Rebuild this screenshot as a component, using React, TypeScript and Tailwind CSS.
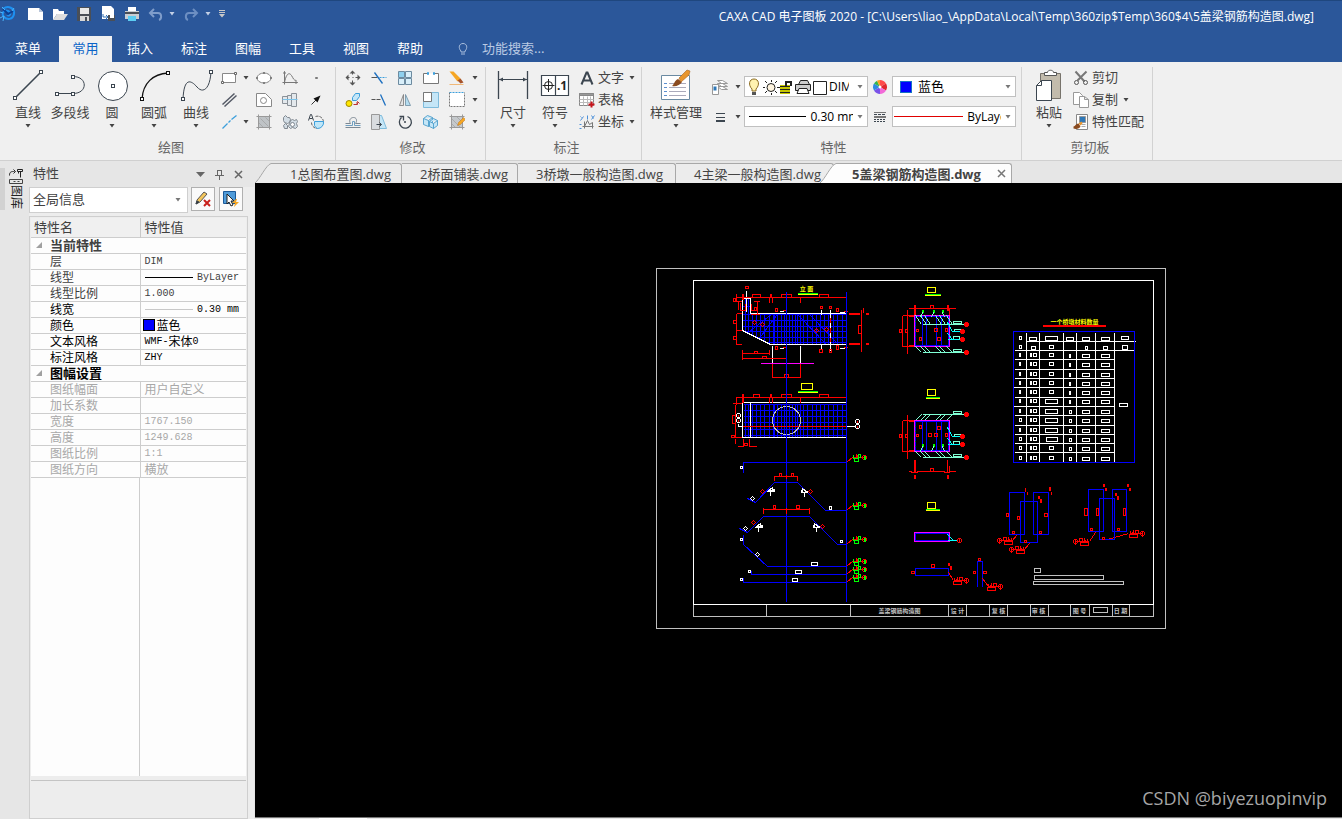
import React from "react";

const DARK = "#3c4650";
const BLUE = "#3b9fdc";
const PALE = "#c5e6f7";

type IconProps = { size?: number; crisp?: boolean; children: React.ReactNode };

// crisp shifts the view by half a unit, so whole coordinates give sharp 1px strokes
const Icon = ({ size = 16, crisp, children }: IconProps) => (
  <svg
    width={size}
    height={size}
    viewBox={crisp ? `-0.5 -0.5 ${size} ${size}` : `0 0 ${size} ${size}`}
    fill="none"
    stroke={DARK}
    className="shrink-0"
    aria-hidden="true"
  >
    {children}
  </svg>
);

const Caret = ({ color = "#444" }: { color?: string }) => (
  <svg width="6" height="4" viewBox="0 0 6 4" className="shrink-0" aria-hidden="true">
    <path d="M.5 0h5L3 3.5z" fill={color} />
  </svg>
);

/* ---------- quick access icons ---------- */

const quickIcons = [
  {
    label: "新建",
    art: (
      <g stroke="none">
        <path d="M0 2h11l4 4v8H0z" fill="#fff" />
        <path d="M11 2v4h4z" fill="#b9c6da" />
      </g>
    ),
  },
  {
    label: "打开",
    art: (
      <g stroke="none">
        <path d="M1 3h5l1 2h5v3H5l-4 6z" fill="#fff" />
        <path d="M5 8h11l-4 6H1z" fill="#dedede" />
      </g>
    ),
  },
  {
    label: "保存",
    art: (
      <g stroke="none">
        <path d="M1 1h14v14H1z" fill="#4a4f57" />
        <path d="M4 2h9v6H4z" fill="#e9e9e9" />
        <path d="M4 10h9v5H4z" fill="#d9d9d9" />
        <path d="M9 11h2v4H9z" fill="#4a4f57" />
      </g>
    ),
  },
  {
    label: "另存为",
    art: (
      <g stroke="none">
        <path d="M2 0h9l3 3v10H2z" fill="#fff" />
        <path d="M3 8v3h5M6 9l2 2-2 2" stroke="#2f6fb5" />
        <path d="M8 9h7v6H8z" fill="#4a4f57" />
        <path d="M10 9h4v3h-4z" fill="#fff" />
      </g>
    ),
  },
  {
    label: "打印",
    art: (
      <g stroke="none">
        <path d="M4 1h8v5H4z" fill="#fff" />
        <path d="M1 5h14v8H1z" fill="#c9cdd2" />
        <path d="M1 6h14v2H1z" fill="#4a4f57" />
        <path d="M4 10h8v5H4z" fill="#5ccdf2" />
      </g>
    ),
  },
];

/* ---------- ribbon icons ---------- */

const knob = (x: number, y: number) => (
  <rect x={x - 1.5} y={y - 1.5} width="3" height="3" fill="#fff" />
);

const drawTools = [
  {
    label: "直线",
    caret: true,
    art: (
      <>
        <path d="M4 30 30 4" strokeWidth="1.6" />
        {knob(4, 30)}
        {knob(30, 4)}
      </>
    ),
  },
  {
    label: "多段线",
    caret: false,
    art: (
      <>
        <path d="M3 25.500h17c15 0 15-17 0-17" />
        {knob(4, 26)}
        {knob(20, 26)}
        {knob(20, 9)}
      </>
    ),
  },
  {
    label: "圆",
    caret: true,
    art: (
      <>
        <circle cx="18" cy="18" r="14.5" fill="#fff" />
        {knob(18, 18)}
      </>
    ),
  },
  {
    label: "圆弧",
    caret: true,
    art: (
      <>
        <path d="M5 31C6 15 16 6 31 5" strokeWidth="1.3" stroke="#111" />
        <g stroke="#111">
          {knob(5, 31)}
          {knob(31, 5)}
        </g>
      </>
    ),
  },
  {
    label: "曲线",
    caret: true,
    art: (
      <>
        <path d="M4 31C5 9 12 12 18 19S31 21 32 4" />
        {knob(4, 31)}
        {knob(32, 4)}
      </>
    ),
  },
];

const drawGrid = [
  {
    label: "矩形",
    caret: true,
    art: (
      <g stroke="#888">
        <path d="M1 3h13v9H1z" fill="#fff" />
        <path d="M0 11h2v2H0zM13 2h2v2h-2z" fill="#fff" stroke="#666" />
      </g>
    ),
  },
  {
    label: "椭圆",
    art: (
      <g stroke="#888">
        <ellipse cx="7.500" cy="7.500" rx="7" ry="5" fill="#fff" />
        <path d="M0 7h1v1H0zM14 7h1v1h-1zM7 2h1v1H7zM7 12h1v1H7z" fill="#fff" stroke="#666" />
      </g>
    ),
  },
  {
    label: "公式曲线",
    art: (
      <g stroke="#777">
        <path d="M2 1v13M0 12h15M1 3l1-2 1 2M13 11l2 1-2 1" />
        <path d="M2 12C4 2 7 2 9 5s2 5 5 5" />
      </g>
    ),
  },
  { label: "点", art: <path d="M7 7h2v1H7z" strokeWidth="0.500" stroke="#555" fill="#555" /> },
  {
    label: "平行线",
    art: <path d="M1 12 13 1M3 14 15 3" strokeWidth="1.500" stroke="#555a66" />,
  },
  {
    label: "等距线",
    art: (
      <g stroke="#888">
        <path d="M0 1h9l6 6v7H0z" fill="#fff" />
        <circle cx="7" cy="8" r="3" />
      </g>
    ),
  },
  {
    label: "孔/轴",
    art: (
      <g stroke="#8a9198">
        <path d="M0 4h5v7H0zM5 3h4v10H5zM9 1h5v13H9z" fill="#e3e8ec" />
        <path d="M0 7h15" stroke="#7cc3ea" />
      </g>
    ),
  },
  {
    label: "箭头",
    art: (
      <>
        <path d="M3 12l6-6" stroke="#333" />
        <path d="M12 3 5 6l4 4z" fill="#111" stroke="none" />
      </>
    ),
  },
  {
    label: "中心线",
    caret: true,
    art: <path d="M1 14 6 9M7 8l2-2M10 5l5-4" stroke={BLUE} strokeWidth="1.300" />,
  },
  {
    label: "剖面线",
    art: (
      <g stroke="#999">
        <path d="M2 2h11v11H2z" fill="#bfc3c6" stroke="none" />
        <path d="M2 0v15M13 0v15M0 2h15M0 13h15" />
        <path d="M2 8l5 5M4 4l8 8M9 3l4 4" strokeWidth="0.600" />
      </g>
    ),
  },
  {
    label: "块",
    art: (
      <>
        <path
          d="M1 3l2-2 2 2h2l1 2-1 3-2 1-3-1-1-2z M8 6l2-1 2 1 2-1 1 2-1 2 1 3-2 2-3-1-2 1-2-2 1-3z M1 11l2-2 2 2v3H2z"
          fill="#d3dde5"
          stroke="#808890"
        />
        <circle cx="10" cy="10" r="2" fill="#fff" stroke="#808890" />
      </>
    ),
  },
  {
    label: "填充",
    art: (
      <>
        <path d="M7 2a6 6 0 0 1 8 6M3 8a6 6 0 0 0 6 6" stroke="#666" strokeDasharray="3 1" />
        <path d="M6 7h9a6 6 0 0 1-6 7 5 5 0 0 1-3-3z" fill="#bfe6f8" stroke={BLUE} />
        <path d="M0 6l2-6h1l2 6M1 4h3" />
      </>
    ),
  },
];

const modifyGrid = [
  {
    label: "移动",
    art: (
      <>
        <path d="M7 1v3M7 10v4M1 7h3M10 7h4M7 7h1" stroke="#555" />
        <path d="M7 0l3 3H4zM7 15l3-3H4zM0 7l3-3v6zM15 7l-3-3v6z" fill="#555" stroke="none" />
      </>
    ),
  },
  {
    label: "裁剪",
    art: (
      <>
        <path d="M0 7h6" stroke="#555" />
        <path d="M8 7h7" stroke={BLUE} strokeDasharray="2 1" />
        <path d="M3 2l8 11" stroke="#1c6fc0" strokeWidth="1.300" />
      </>
    ),
  },
  {
    label: "阵列",
    art: (
      <g stroke="#6d8ba0">
        <path d="M1 1h6v6H1z" fill="#8fd0ee" />
        <path d="M8 1h6v6H8zM1 8h6v6H1zM8 8h6v6H8z" fill="#d9effa" />
      </g>
    ),
  },
  {
    label: "打断",
    art: (
      <>
        <path d="M4 3H0v10h15V3h-4" fill="#fff" stroke="#777" />
        <path d="M4 2h1v2H4zM10 2h1v2h-1z" stroke={BLUE} fill="#fff" />
      </>
    ),
  },
  {
    label: "删除",
    caret: true,
    art: (
      <>
        <path d="M0 1h4l7 7-3 3z" fill="#f5a623" stroke="none" />
        <path d="M8 10l3-2 3 4-3 1z" fill="#a5522a" stroke="none" />
        <path d="M0 14h14" stroke="#f0b878" />
      </>
    ),
  },
  {
    label: "平移复制",
    art: (
      <>
        <circle cx="3.500" cy="11" r="3" fill="#ffe600" stroke="#a08a00" />
        <path d="M7 5l3-4h4v3l-3 4H7z" fill={PALE} stroke={BLUE} />
        <path d="M8 12h4v-2M11 11l1-2 2 2" stroke="#b33" />
      </>
    ),
  },
  {
    label: "延伸",
    art: (
      <>
        <path d="M0 7h10" stroke="#555" strokeDasharray="4 1" />
        <path d="M9 2l5 11" stroke="#1c6fc0" strokeWidth="1.300" />
      </>
    ),
  },
  {
    label: "镜像",
    art: (
      <g strokeWidth="0.800">
        <path d="M6 2v11H2z" fill="#e4e4e4" stroke="#777" />
        <path d="M8 2v11h5z" fill="#b5ddf0" stroke="#6d8ba0" />
      </g>
    ),
  },
  {
    label: "缩放",
    art: (
      <>
        <path d="M0 0h15v15H0z" fill={PALE} stroke="#7fbbdb" />
        <path d="M0 0h8v9H0z" fill="#fff" stroke="#777" />
      </>
    ),
  },
  {
    label: "拉伸",
    caret: true,
    art: (
      <>
        <path d="M0 0v14h15V0" fill="#fff" stroke="#777" strokeDasharray="2 1" />
        <path d="M0 0h15" stroke={BLUE} strokeDasharray="2 1" />
      </>
    ),
  },
  {
    label: "等距",
    art: (
      <g stroke="#7c8893">
        <path d="M0 9h5c-2-3 0-6 3-6s4 3 2 6h5M0 13h15" />
        <path d="M0 11h7V7h2v4h6" stroke="#6f9fc0" />
      </g>
    ),
  },
  {
    label: "倾斜",
    art: (
      <>
        <path d="M8 1h2l5 13H8z" fill={PALE} stroke="#7fbbdb" />
        <path d="M0 0h8v15H0z" fill="#d9dcdf" stroke="#999" />
        <path d="M5 10h5M8 8l2 2-2 2" />
      </>
    ),
  },
  {
    label: "旋转",
    art: (
      <>
        <path d="M10 2a6 6 0 1 1-6 1" strokeWidth="1.300" />
        <path d="M2 2h4v4" strokeWidth="1.300" />
        <path d="M7 7h1v1H7z" />
      </>
    ),
  },
  {
    label: "立体",
    art: (
      <g stroke="#4c9dcb" strokeWidth="0.900">
        <path d="M0 4l4-3 5 2v6l-4 3-5-2zM0 4l5 2 4-3M5 6v6" fill={PALE} />
        <path d="M6 7l4-3 4 2v5l-4 3-4-2zM6 7l4 2 4-3M10 9v5" fill={PALE} />
      </g>
    ),
  },
  {
    label: "编辑填充",
    caret: true,
    art: (
      <>
        <path d="M2 2h11v11H2z" fill="#c5c9cc" stroke="none" />
        <path d="M2 0v15M13 0v15M0 2h15M0 13h15" stroke="#999" />
        <path d="M2 9l4 4M2 4l9 9M7 2l6 6" stroke="#999" strokeWidth="0.600" />
        <path d="M8 11l1-3 5-5 2 2-5 5z" fill="#f5a623" stroke="#a86520" strokeWidth="0.400" />
      </>
    ),
  },
];

const DimensionIcon = () => (
  <Icon size={34}>
    <path d="M2.500 3v28M31.500 3v28" strokeWidth="1.300" />
    <path d="M3 11.500h28" />
    <path d="M3 11.500l4-2v4zM31 11.500l-4-2v4z" fill={DARK} stroke="none" />
  </Icon>
);

const SymbolIcon = () => (
  <Icon size={34}>
    <path d="M3.500 7.500h27v20h-27zM17.500 7.500v20" fill="#fff" strokeWidth="1.200" />
    <circle cx="10.500" cy="17.500" r="4" stroke="#222" />
    <path d="M4.500 17.500h12M10.500 11v13" stroke="#222" />
    <text x="19" y="22" fontSize="12" fontWeight="700" fill="#222" stroke="none">
      .1
    </text>
  </Icon>
);

const StyleIcon = () => (
  <Icon size={34}>
    <path d="M2.500 7.500h28v24h-28z" fill="#fff" stroke="#6a8aa2" />
    <path d="M5 15.500h3M5 19.500h3M5 23.500h3M5 27.500h3" stroke="#5b8fd0" />
    <path d="M10 15.500h17M10 19.500h17M10 23.500h17M10 27.500h17" stroke="#aab" />
    <path d="M13 18c2-1 2-5 6-7l4 3c-2 3-6 5-10 4z" fill="#8a4b20" stroke="none" />
    <path d="M20 10 28 2l3 1-1 4-8 7z" fill="#e8962e" stroke="#a86520" strokeWidth="0.600" />
  </Icon>
);

const PasteIcon = () => (
  <Icon size={34}>
    <path d="M8.500 5.500h20v25h-20z" fill="#c2bbac" stroke="#77736b" />
    <path d="M12.500 7.500v-3h3c0-3 6-3 6 0h3v3z" fill="#fff" stroke="#555" />
    <path d="M4.500 17.500l5-5h10v20h-15z" fill="#fff" />
    <path d="M4.500 17.500h5v-5" />
  </Icon>
);

const BigButton = ({
  label,
  caret,
  wide,
  children,
}: {
  label: string;
  caret: boolean;
  wide?: boolean;
  children: React.ReactNode;
}) => (
  <button
    type="button"
    className={`flex flex-col items-center whitespace-nowrap ${wide ? "w-[60px]" : "w-[42px]"}`}
  >
    <span className="h-9 flex items-center">{children}</span>
    <span className="leading-[18px]">{label}</span>
    <span className="h-[10px] flex items-center">{caret && <Caret />}</span>
  </button>
);

const IconButton = ({ label, children }: { label: string; children: React.ReactNode }) => (
  <button type="button" aria-label={label} className="h-[22px] flex items-center justify-center">
    <Icon crisp>{children}</Icon>
  </button>
);

const Group = ({
  title,
  className,
  children,
}: {
  title: string;
  className: string;
  children: React.ReactNode;
}) => (
  <section className={`flex flex-col shrink-0 border-r border-[#d2d2d2] ${className}`}>
    <div className="flex h-[66px]">{children}</div>
    <h2 className="mt-1 text-center leading-5 text-[#666]">{title}</h2>
  </section>
);

const SmallButton = ({
  label,
  caret,
  children,
}: {
  label: string;
  caret?: boolean;
  children: React.ReactNode;
}) => (
  <button type="button" className="h-[22px] flex items-center gap-[3px] whitespace-nowrap">
    <Icon crisp>{children}</Icon>
    <span>{label}</span>
    {caret && (
      <span className="pl-[2px]">
        <Caret />
      </span>
    )}
  </button>
);

const Combo = ({
  label,
  value,
  className,
  children,
}: {
  label: string;
  value: string;
  className: string;
  children?: React.ReactNode;
}) => (
  <div className="w-[124px] h-[21px] flex items-center border border-[#c0c0c0] bg-white font-['Open_Sans','Noto_Sans_CJK_SC',sans-serif] text-xs text-black">
    {children}
    <select aria-label={label} className={`appearance-none bg-transparent ${className}`}>
      <option>{value}</option>
    </select>
    <span className="w-[14px] ml-auto flex justify-center">
      <Caret color="#777" />
    </span>
  </div>
);

const Ribbon = () => (
  <div className="flex h-[99px] pt-[5px] border-b border-[#d0d0d0] bg-[#f0f0f0] text-[13px] text-[#444] overflow-hidden">
    <Group title="绘图" className="w-[336px] pl-[7px]">
      {drawTools.map((tool) => (
        <BigButton key={tool.label} label={tool.label} caret={tool.caret}>
          <Icon size={34}>{tool.art}</Icon>
        </BigButton>
      ))}
      <div className="grid grid-cols-[24px_10px_26px_26px_26px]">
        {drawGrid.map((tool, i) => (
          <React.Fragment key={tool.label}>
            <IconButton label={tool.label}>{tool.art}</IconButton>
            {i % 4 === 0 && (
              <span className="flex items-center justify-center">{tool.caret && <Caret />}</span>
            )}
          </React.Fragment>
        ))}
      </div>
    </Group>

    <Group title="修改" className="w-[150px] pl-1">
      <div className="grid grid-cols-[26px_26px_26px_26px_26px_10px]">
        {modifyGrid.map((tool) => (
          <React.Fragment key={tool.label}>
            <IconButton label={tool.label}>{tool.art}</IconButton>
            {/* only the last icon of a row opens a menu */}
            {tool.caret && (
              <span className="flex items-center justify-center">
                <Caret />
              </span>
            )}
          </React.Fragment>
        ))}
      </div>
    </Group>

    <Group title="标注" className="w-[156px] pl-[6px]">
      <BigButton label="尺寸" caret>
        <DimensionIcon />
      </BigButton>
      <BigButton label="符号" caret>
        <SymbolIcon />
      </BigButton>
      <div className="ml-[3px]">
        <SmallButton label="文字" caret>
          <path d="M2 14 7 2h1l5 12M4 10h7" strokeWidth="2" />
        </SmallButton>
        <SmallButton label="表格">
          <path d="M0 1h14v12H0z" fill="#fff" stroke="#888" />
          <path d="M0 1h14v2H0z" fill="#999" stroke="#888" />
          <path d="M0 7h14M0 10h14M4 4v9M8 4v9M11 4v9" stroke="#bbb" />
          <path d="M12 9v6M9 12h6" stroke="#c8141c" strokeWidth="2" />
        </SmallButton>
        <SmallButton label="坐标" caret>
          <path d="M5 7v7M3 12h11M5 12l3-6 2 4 3-2v6" stroke="#777" />
          <path d="M1 2l1 1M4 2 1 6M8 1v4M12 1l2 3M15 1l-3 4M0 10h2M0 14h2" stroke="#4b8fd8" />
        </SmallButton>
      </div>
    </Group>

    <Group title="特性" className="w-[380px] pl-1">
      <BigButton label="样式管理" caret wide>
        <StyleIcon />
      </BigButton>
      <div className="pt-[9px] flex flex-col gap-[9px]">
        <div className="flex items-center">
          <button type="button" aria-label="图层" className="w-[38px] pl-[6px] flex items-center gap-[7px]">
            <Icon crisp>
              <path d="M5 1h5l5 3H9zM5 4h5l5 3H9zM5 7h5l5 3H9z" fill="#fff" stroke="#999" />
              <path d="M0 5h6v10H0z" fill="#fff" stroke="#999" />
              <path d="M1 7h3v4H1z" fill="#2f78b8" stroke="none" />
            </Icon>
            <Caret />
          </button>
          <Combo label="当前图层" value="DIM" className="w-5 ml-[2px] overflow-hidden">
            <svg width="82" height="18" viewBox="0 0 82 18" fill="none" stroke="#222" className="shrink-0" aria-hidden="true">
              <path d="M7 11c-4-4-3-10 2-10s6 6 2 10v2H7z" fill="#fff2b0" stroke="#8a6a20" />
              <path d="M7 14h4v3H7z" fill="#555" stroke="none" />
              <circle cx="26" cy="9.500" r="4" fill="#fff5e0" />
              <path d="M26.500 2v2M26.500 15v2M18 9.500h2M32 9.500h3M20 3l2 2M30 13l2 2M32 3l-2 2M22 13l-2 2" />
              <path d="M35 7h10v9H35z" fill="#c6c600" stroke="none" />
              <path d="M35 8.500h10M35 11.500h10M35 14.500h10" />
              <path d="M41 8V4h5v4" strokeWidth="2" />
              <path d="M53.500 6.500l2-4h7l2 4M50.500 6.500h15v6h-15z" fill="#ccc" />
              <path d="M54 10.500h8l2 5H52z" fill="#fff" />
              <path d="M68.500 3.500h13v13h-13z" fill="#fff" />
            </svg>
          </Combo>
          <button type="button" aria-label="颜色" className="w-6 flex justify-center">
            <Icon size={14}>
              <g stroke="none">
                <path d="M7 7V0a7 7 0 0 1 6 3.500z" fill="#ff4a4a" />
                <path d="M7 7l6-3.500a7 7 0 0 1 0 7z" fill="#e0262d" />
                <path d="M7 7l6 3.500A7 7 0 0 1 7 14z" fill="#f26ad8" />
                <path d="M7 7v7a7 7 0 0 1-6-3.500z" fill="#7a52e8" />
                <path d="M7 7l-6 3.500a7 7 0 0 1 0-7z" fill="#2f8ae0" />
                <path d="M7 7 1 3.500A7 7 0 0 1 4 .7z" fill="#35b54a" />
                <path d="M7 7 4 .7A7 7 0 0 1 7 0z" fill="#ff9d1e" />
                <circle cx="7" cy="7" r="1.500" fill="#fff" />
              </g>
            </Icon>
          </button>
          <Combo label="当前颜色" value="蓝色" className="w-16 ml-[6px] text-[13px]">
            <span className="ml-[7px] size-3 border border-[#1673c4] bg-[#0000ff]" />
          </Combo>
        </div>
        <div className="flex items-center">
          <button type="button" aria-label="线宽" className="w-[38px] pl-[6px] flex items-center gap-[7px]">
            <Icon>
              <path d="M4 4.500h9M4 8.500h9" />
              <path d="M4 12h9" strokeWidth="2" />
            </Icon>
            <Caret />
          </button>
          <Combo label="当前线宽" value="0.30 mm" className="w-[43px] ml-1 overflow-hidden">
            <span className="ml-1 w-[59px] border-t border-black" />
          </Combo>
          <button type="button" aria-label="线型" className="w-6 flex justify-center">
            <Icon size={14}>
              <path d="M1 2.500h12" stroke="#777" />
              <path d="M1 4.500h12" strokeDasharray="3 1" />
              <path d="M1 7h12" strokeWidth="2" stroke="#777" />
              <path d="M1 9.500h12M1 11.500h12" strokeDasharray="2 1" />
            </Icon>
          </button>
          <Combo label="当前线型" value="ByLayer" className="w-[34px] ml-1 overflow-hidden">
            <span className="ml-[1px] w-[70px] border-t border-[#e00000]" />
          </Combo>
        </div>
      </div>
    </Group>

    <Group title="剪切板" className="w-[131px] pl-[6px]">
      <BigButton label="粘贴" caret>
        <PasteIcon />
      </BigButton>
      <div className="ml-[3px]">
        <SmallButton label="剪切">
          <path d="M2 1l9 10M13 1 4 10" stroke="#777" strokeWidth="2" />
          <circle cx="3" cy="12" r="2" stroke="#555" />
          <circle cx="12" cy="12" r="2" stroke="#555" />
        </SmallButton>
        <SmallButton label="复制" caret>
          <path d="M0 0h6l3 3v9H0z" fill="#fff" stroke="#999" />
          <path d="M6 4h5l4 3v8H6zM11 4v3h4" fill="#fff" stroke="#999" />
        </SmallButton>
        <SmallButton label="特性匹配">
          <path d="M3 0h11v15H3z" fill="#fff" stroke="#888" />
          <path d="M6 2h6v6H6z" fill="#2f78b8" stroke="#999" />
          <path d="M8 10h4M8 12h4" stroke="#aaa" />
          <path d="M0 12c2 0 2-3 5-3l2 3c-1 2-4 3-7 2z" fill="#8a4b20" stroke="none" />
          <path d="M5 9l3-2 1 2-2 2z" fill="#e8962e" stroke="none" />
        </SmallButton>
      </div>
    </Group>
  </div>
);

const menuTabs = ["常用", "插入", "标注", "图幅", "工具", "视图", "帮助"];

const Header = () => (
  <header className="h-[62px] flex flex-col border-t border-[#1f477f] bg-[#2b579a] text-white">
    <div className="h-[35px] flex items-start">
      <div className="h-[26px] flex items-center">
        <Icon>
          <path d="M3 3c5-4 12-1 11 5s-7 6-10 3 0-8 4-6 2 6-1 4" stroke="#1e90f0" strokeWidth="2" />
          <path d="M3 3l5 5 5-3" stroke="#0b3f94" strokeWidth="2" />
          <path d="M2 1l3 3M0 6l3 1M3 15l1-5M0 12l4-2M14 2l-2 3" stroke="#4db4f8" />
        </Icon>
        <div className="ml-3 flex gap-2">
          {quickIcons.map((q) => (
            <button key={q.label} type="button" aria-label={q.label}>
              <Icon>{q.art}</Icon>
            </button>
          ))}
          <button type="button" aria-label="撤销" className="flex items-center gap-[5px]">
            <Icon>
              <path d="M6 3 2 7l4 4M2 7h8c4 0 4 6 1 7" stroke="#7f9dca" strokeWidth="2" />
            </Icon>
            <Caret color="#c3d0e6" />
          </button>
          <button type="button" aria-label="重做" className="flex items-center gap-[6px]">
            <Icon>
              <path d="M10 3l4 4-4 4M14 7H6C2 7 2 13 5 14" stroke="#6d8fc2" strokeWidth="2" />
            </Icon>
            <Caret color="#c3d0e6" />
          </button>
        </div>
        <button type="button" aria-label="自定义快速访问工具栏" className="ml-2">
          <svg width="6" height="8" viewBox="0 0 6 8" aria-hidden="true">
            <path d="M0 .5h6M0 2.500h6" stroke="#c8c8c8" />
            <path d="M0 4h6L3 7.500z" fill="#c8c8c8" />
          </svg>
        </button>
      </div>
      <h1 className="ml-auto mr-7 h-8 flex items-center font-['Open_Sans','Noto_Sans_CJK_SC',sans-serif] text-xs whitespace-nowrap">
        CAXA CAD 电子图板 2020 - [C:\Users\liao_\AppData\Local\Temp\360zip$Temp\360$4\5盖梁钢筋构造图.dwg]
      </h1>
    </div>
    <nav className="flex h-[26px] text-[13px]">
      <button type="button" className="w-[59px] pr-[3px]">
        菜单
      </button>
      {menuTabs.map((tab, i) => (
        <button
          key={tab}
          type="button"
          className={i === 0 ? "w-[54px] border-r border-[#2b579a] bg-[#f0f0f0] text-[#0a64c8]" : "w-[54px]"}
        >
          {tab}
        </button>
      ))}
      <label className="flex items-center gap-[14px] ml-[21px]">
        <svg width="10" height="14" viewBox="0 0 10 14" fill="none" stroke="#a9bedd" aria-hidden="true">
          <path d="M3 9C0 6 1 1.500 5 1.500S10 6 7 9v1H3zM3 12h4" />
        </svg>
        <input
          type="text"
          aria-label="功能搜索"
          placeholder="功能搜索..."
          className="w-24 bg-transparent placeholder:text-[#b9c9e3]"
        />
      </label>
    </nav>
  </header>
);

/* ---------- property panel ---------- */

type Row = {
  name: string;
  value?: string;
  cjk?: string;
  tail?: string;
  line?: string;
  swatch?: boolean;
  tone?: string;
};

const currentRows: Row[] = [
  { name: "层", value: "DIM", tone: "text-[#404040]" },
  { name: "线型", value: "ByLayer", line: "border-black", tone: "text-[#404040]" },
  { name: "线型比例", value: "1.000", tone: "text-[#404040]" },
  { name: "线宽", value: "0.30 mm", line: "border-[#c8c8c8]", tone: "text-black" },
  { name: "颜色", cjk: "蓝色", swatch: true, tone: "text-black" },
  { name: "文本风格", value: "WMF-", cjk: "宋体", tail: "0", tone: "text-black" },
  { name: "标注风格", value: "ZHY", tone: "text-black" },
];

const sheetRows: Row[] = [
  { name: "图纸幅面", cjk: "用户自定义" },
  { name: "加长系数" },
  { name: "宽度", value: "1767.150" },
  { name: "高度", value: "1249.628" },
  { name: "图纸比例", value: "1:1" },
  { name: "图纸方向", cjk: "横放" },
];

const PropertyRow = ({ row }: { row: Row }) => (
  <tr className={`h-4 border-b border-[#cdcdcd] leading-[15px] ${row.tone ?? "text-[#a8a8a8]"}`}>
    <th scope="row" className="w-[109px] p-0 pl-[19px] text-left font-normal border-r border-[#cdcdcd]">
      {row.name}
    </th>
    <td className="p-0">
      <div className={`flex h-[15px] items-center ${row.swatch ? "pl-[2px]" : "pl-1"}`}>
        {row.line && <span className={`w-12 border-t ${row.line}`} />}
        {row.swatch && <span className="size-3 mr-[2px] border border-black bg-[#0000ff]" />}
        {row.value && (
          <span
            className={`font-['Liberation_Mono',monospace] text-[10px] whitespace-pre ${row.line ? "ml-auto pr-[7px]" : ""}`}
          >
            {row.value}
          </span>
        )}
        {row.cjk}
        {row.tail && <span className="font-['Liberation_Mono',monospace] text-[10px]">{row.tail}</span>}
      </div>
    </td>
  </tr>
);

const SectionRow = ({ title, tone }: { title: string; tone: string }) => (
  <tr className={`h-4 border-b border-[#cdcdcd] leading-[15px] ${tone}`}>
    <th colSpan={2} scope="colgroup" className="p-0 text-left text-[13px] font-bold">
      <span className="flex items-center h-[15px]">
        <svg width="19" height="6" viewBox="0 0 19 6" aria-hidden="true">
          <path d="M5 6h6V0z" fill="#a0a0a0" />
        </svg>
        {title}
      </span>
    </th>
  </tr>
);

const PropertyPanel = () => (
  <aside className="w-[225px] shrink-0 flex flex-col bg-[#ededed] text-[#404040]">
    <div className="flex items-center h-[26px] pl-1 pr-[11px] bg-[#e6e6e6]">
      <h2 className="text-[13px] text-[#444]">特性</h2>
      <div className="ml-auto flex items-center gap-[9px]">
        <button type="button" aria-label="窗口位置">
          <svg width="9" height="5" viewBox="0 0 9 5" aria-hidden="true">
            <path d="M0 0h9L4.500 5z" fill="#666" />
          </svg>
        </button>
        <button type="button" aria-label="自动隐藏">
          <Icon size={11}>
            <path d="M3.500 1v5M7.500 1v5M3 1.500h5M1 6.500h9M5.500 7v4" stroke="#666" />
          </Icon>
        </button>
        <button type="button" aria-label="关闭">
          <Icon size={9}>
            <path d="M1 1l7 7M8 1 1 8" stroke="#666" strokeWidth="1.500" />
          </Icon>
        </button>
      </div>
    </div>

    <div className="flex items-start h-[29px] pr-[11px]">
      <div className="flex-1 h-[26px] flex items-center border border-[#cfcfcf] bg-white">
        <select aria-label="选择对象" className="flex-1 pl-[3px] appearance-none text-[13px]">
          <option>全局信息</option>
        </select>
        <span className="pr-[6px]">
          <Caret color="#777" />
        </span>
      </div>
      <button
        type="button"
        aria-label="清除选择"
        className="ml-[3px] size-6 flex items-center justify-center border border-[#b0b0b0] bg-[#fafafa]"
      >
        <Icon>
          <path d="M1 13l1-4 7-8 3 2-7 8z" fill="#f3c55b" stroke="#555" />
          <path d="M1 13l1-3 2 1z" fill="#222" />
          <path d="M9 9l6 6M15 9l-6 6" stroke="#c8201c" strokeWidth="2" />
        </Icon>
      </button>
      <button
        type="button"
        aria-label="快速选择"
        className="ml-1 size-6 flex items-center justify-center border border-[#b0b0b0] bg-[#fafafa]"
      >
        <Icon>
          <path d="M.5.5h12v12H.5z" fill="#4f9bd9" stroke="#1c5a99" />
          <path d="M4 3v10l2-2 2 4 2-1-2-4h3z" fill="#fff" stroke="#222" />
          <path d="M13 8l-4 4h3l-1 4 5-5h-3l1-3z" fill="#f5a623" stroke="none" />
        </Icon>
      </button>
    </div>

    <div className="flex-1 min-h-0 mr-[6px] flex flex-col border border-[#cfcfcf] p-px">
      <div className="flex-1 min-h-0 flex flex-col bg-[#fdfdfd] overflow-hidden">
        <table className="w-full table-fixed border-collapse text-xs">
          <thead>
            <tr className="h-[19px] bg-[#f0f0f0] text-[13px] border-b border-[#cdcdcd] leading-[18px]">
              <th scope="col" className="w-[109px] p-0 pl-[3px] text-left font-normal border-r border-[#c8c8c8]">
                特性名
              </th>
              <th scope="col" className="p-0 pl-1 text-left font-normal">
                特性值
              </th>
            </tr>
          </thead>
          <tbody>
            <SectionRow title="当前特性" tone="text-[#404040]" />
            {currentRows.map((row) => (
              <PropertyRow key={row.name} row={row} />
            ))}
            <SectionRow title="图幅设置" tone="text-black" />
            {sheetRows.map((row) => (
              <PropertyRow key={row.name} row={row} />
            ))}
          </tbody>
        </table>
        <div className="flex-1 w-[109px] border-r border-[#cdcdcd]" />
      </div>
      <div className="h-[5px] border-b border-[#c4c4c4]" />
      <div className="h-9" />
    </div>
  </aside>
);

/* ---------- drawing ---------- */

const RED = "#ff0000";
const WHITE = "#ffffff";
const GREY = "#c0c0c0";
const AQUA = "#7fffd4";

type BoxData = [number, number, number, number];

const Boxes = ({ items, color = RED, solid }: { items: BoxData[]; color?: string; solid?: boolean }) => (
  <g stroke={color} fill={solid ? color : "none"}>
    {items.map(([x, y, w, h]) => (
      <rect key={`${x}-${y}`} x={x} y={y} width={w} height={h} />
    ))}
  </g>
);

const Underline = ({ x, y, w }: { x: number; y: number; w: number }) => (
  <>
    <path d={`M${x} ${y}h${w}`} stroke="#00ff00" />
    <path d={`M${x} ${y + 1}h${w}`} stroke="#ffff00" />
  </>
);

const Diamond = ({ x, y, color = RED }: { x: number; y: number; color?: string }) => (
  <path d={`M${x - 2} ${y}l2-2 2 2-2 2z`} stroke={color} />
);

// numbered leader at the right edge of a bar
const BarTag = ({ y }: { y: number }) => (
  <g stroke={RED}>
    <path d={`M847 ${y - 1}l5-4h12M856 ${y - 9}v4M857 ${y - 8}v3`} />
    <circle cx="864" cy={y - 5} r="2" />
    <path d={`M864 ${y - 7}v4`} stroke="#00ff00" strokeWidth="2" />
    <path d={`M853 ${y - 8}v4M858 ${y - 8}h2v3h-2zM854 ${y - 4}h4v3h-4z`} stroke="#00ff00" />
  </g>
);

const RedTag = ({ x, y, side }: { x: number; y: number; side: "left" | "right" }) => {
  const s = side === "right" ? 1 : -1;
  return (
    <g stroke={RED}>
      <path d={`M${x} ${y}h${-13 * s}`} />
      <circle cx={x} cy={y} r="2" />
      <path d={`M${x} ${y - 2}v5`} />
      <rect x={s > 0 ? x - 13 : x + 5} y={y + 1} width="8" height="3" />
      <rect x={s > 0 ? x - 7 : x + 4} y={y - 3} width="3" height="3" />
      <path d={`M${x - 9 * s} ${y - 4}v4M${x - 10 * s} ${y - 2}v2M${x - 12 * s} ${y - 3}v3`} />
    </g>
  );
};

const gridX = [745, 748, 752, 756, 760, 764, 769, 773, 774, 777, 781, 784, 789, 792, 795, 797, 800, 803, 807, 812, 816, 820, 824, 828, 833, 837, 842];

const Arrowhead = ({ x, y, flip }: { x: number; y: number; flip?: boolean }) => {
  const s = flip ? -1 : 1;
  return (
    <g stroke={WHITE}>
      <path d={`M${x - 3 * s} ${y + 1}L${x + 2 * s} ${y - 3}v4z`} />
      <path d={`M${x} ${y}v5M${x - s} ${y}h2`} />
      <path d={`M${x + s * 3} ${y - 2}v3`} strokeWidth="2" />
    </g>
  );
};

const Section = ({ top, flip }: { top: number; flip?: boolean }) => {
  const bottom = top + 31;
  const upper = flip ? top - 6 : top + 9;
  const lower = bottom + 6;
  const slant = flip ? -6 : 9;
  return (
    <g>
      <path
        d={`M902 ${top}v31M907 ${top - 6}v44M902 ${top}h12M902 ${bottom}h12M908 ${top + 1}h6M908 ${bottom - 1}h6`}
        stroke={RED}
      />
      <rect x="915" y={top + 1} width="33" height="29" stroke="#0000ff" />
      <path d={`M922 ${top}v31M926 ${top}v31M936 ${top}v31M941 ${top}v31`} stroke="#0000ff" />
      <rect x="914" y={top} width="35" height="31" stroke="#ff00ff" />
      <path d={`M915 ${top + 5}v22`} stroke="#008000" strokeDasharray="1 4" />
      <g stroke={AQUA}>
        <path d={`M922 ${upper}h43M922 ${lower}h43`} />
        {[915, 920, 924, 935, 939, 946].map((x) => (
          <path key={x} d={`M${x} ${top}l6 ${slant}M${x} ${bottom}l6 6`} />
        ))}
        <rect x="953" y={upper - 3} width="8" height="2" />
        <rect x="953" y={lower - 3} width="8" height="2" />
        <rect x="954" y={top + 14} width="6" height="2" />
        <rect x="953" y={top + 21} width="6" height="3" />
      </g>
      <path d={`M947 ${top + 7}l5 9h8M947 ${top + 18}l5 6M947 ${top + 24}h13`} stroke="#00ffff" />
      <g stroke={RED} fill={RED}>
        <circle cx="966" cy={upper} r="2" />
        <circle cx="966" cy={lower} r="2" />
        <circle cx="962" cy={top + 16} r="2" />
        <circle cx="962" cy={top + 24} r="2" />
      </g>
      <Boxes
        items={[
          [899, top + 14, 2, 3],
          [905, top + 14, 2, 3],
          [916, top + 14, 2, 2],
          [934, top + 13, 3, 3],
          [928, flip ? top + 13 : top + 15, flip ? 3 : 2, flip ? 3 : 0],
          [945, top + 13, 2, 3],
          [919, flip ? top + 5 : top + 22, 2, 3],
          [937, flip ? top + 6 : top + 22, 3, 3],
        ]}
      />
      {[922, 933, 942].map((x) => (
        <g key={x} stroke="#00ff00">
          <path d={`M${x} ${flip ? top + 23 : top - 6}v3`} strokeWidth="2" />
          <path d={`M${x} ${flip ? bottom - 5 : top - 3}l${x === 942 ? 2 : -2} 5`} stroke={AQUA} />
        </g>
      ))}
    </g>
  );
};

const rowY = [338, 347, 355, 364, 374, 383, 392, 401, 411, 420, 430, 439, 448, 458];
const specWidth = [12, 4, 4, 4, 4, 4, 4, 12, 12, 12, 12, 11, 4, 4];

const QuantityTable = () => (
  <g>
    <path
      d="M1026 332v130M1039 332v130M1063 332v130M1076 332v130M1095 332v130M1114 332v130M1026 341h109M1014 350h120M1014 359h100M1014 369h100M1014 378h100M1013 387h101M1014 397h100M1013 406h101M1014 415h100M1014 425h100M1014 434h100M1014 443h100M1014 452h100"
      stroke={WHITE}
    />
    <rect x="1013" y="331" width="121" height="131" stroke="#0000ff" />
    {rowY.map((y, i) => (
      <g key={y} stroke={WHITE}>
        <rect x="1019" y={y - 2} width={i < 2 || i === 9 || i > 10 ? 2 : 1} height="3" />
        {i < 2 ? (
          <rect x={i ? 1031 : 1029} y={y - 1} width={i ? 4 : 7} height="3" />
        ) : (
          <path d={`M1030 ${y - 2}h1v3h-1zM1033 ${y - 2}h3v3h-3z`} />
        )}
        <rect x={1051 - specWidth[i] / 2} y={y - 2} width={specWidth[i]} height={specWidth[i] > 5 ? 4 : 3} />
        {i !== 1 && <rect x={i ? 1069 : 1066} y={y - 1} width={i ? (i > 7 ? 2 : 1) : 7} height="3" />}
        <rect x={i === 1 ? 1085 : 1082} y={y - 1} width={i === 1 ? 2 : 7} height="3" />
        <rect x={i === 1 ? 1103 : 1101} y={y - 1} width={i === 1 ? 4 : 8} height="3" />
      </g>
    ))}
    <Boxes
      color={WHITE}
      items={[
        [1121, 336, 7, 3],
        [1122, 345, 5, 4],
        [1119, 403, 8, 3],
      ]}
    />
    <text x="1074" y="323" fontSize="6" fontWeight="700" fill="#ffff00" textAnchor="middle">
      一个桥墩材料数量
    </text>
    <path d="M1042 325.500h63" stroke={RED} strokeWidth="2" />
  </g>
);

const Elevation = () => (
  <g>
    <clipPath id="beam">
      <path d="M742 298h8v15h96v31h-76l-28-14z" />
    </clipPath>
    <g clipPath="url(#beam)" stroke="#0000ff">
      {gridX.map((x) => (
        <path key={x} d={`M${x} 298v46`} />
      ))}
      <path d="M742 306h8M742 314h104M742 320h104M742 326h104M742 331h104M742 337h104M742 342h104" />
      <path d="M745 334l26-20M758 339l18-24M798 315l28 29M810 315l28 29" />
    </g>
    <path d="M742 298h8v15h96M742 298v32l28 14h76M746 290v21M757 301v6M772 345v18M800 345v18" stroke={WHITE} />
    <path d="M779 311h4M839 312h5M779 348h4M839 348h5" stroke={WHITE} />
    <path
      d="M736 297h110M736 293v8M742 293v6M743 293v6M769 297v5M772 297v5M800 297v5M736 313v31M736 313h5M736 330h5M736 344h5M732 301h9M738 301v8M740 302v8h4M745 303v7M751 303v7h5M753 301h6M757 301v13M750 314h9"
      stroke={RED}
    />
    <path
      d="M742 349v10M769 349v5M742 353h27M742 358h44M772 363v14M800 363v14M772 377h28M782 310h4M843 311h4M782 347h4M843 347h4M861 309v42M863 307v5"
      stroke={RED}
    />
    <path d="M848 313.500h11M848 343.500h11M865 313.500h3M865 343.500h3" stroke={RED} strokeWidth="2" />
    <path d="M830 309v41M821 309v5M821 344v5" stroke={WHITE} />
    <path d="M830 317v24" stroke={RED} strokeDasharray="5 5" />
    <path d="M760 363h53" stroke="#ff00ff" />
    <Boxes
      items={[
        [745, 286, 3, 2],
        [752, 294, 8, 3],
        [770, 294, 1, 3],
        [781, 294, 10, 3],
        [819, 294, 9, 3],
        [733, 298, 2, 3],
        [733, 320, 3, 3],
        [733, 336, 3, 3],
        [754, 307, 2, 3],
        [754, 351, 3, 2],
        [762, 356, 4, 2],
        [784, 374, 4, 3],
        [775, 308, 2, 3],
        [775, 346, 2, 3],
        [836, 308, 2, 3],
        [836, 345, 2, 4],
        [820, 306, 2, 2],
        [829, 306, 2, 2],
        [819, 349, 3, 3],
        [829, 349, 2, 3],
        [858, 325, 3, 8],
      ]}
    />
    <Diamond x={754} y={322} />
    <Diamond x={762} y={324} />
    <Diamond x={816} y={330} />
    <Diamond x={826} y={329} />
    <text x="806" y="290" fontSize="6" fontWeight="700" fill="#ffff00" textAnchor="middle">
      立 面
    </text>
    <Underline x={797} y={293} w={20} />
  </g>
);

const PlanView = () => (
  <g>
    <g stroke="#0000ff">
      {gridX.map((x) => (
        <path key={x} d={`M${x} 403v34`} />
      ))}
      <path d="M743 404h103M743 410h103M743 416h103M743 422h103M743 429h103M743 435h103" />
    </g>
    <path d="M742 402h104M742 437h104M742 402v35M750 402v35M846 426h9M738 423v3h4" stroke={WHITE} />
    <path
      d="M736 397h110M742 393v9M743 393v9M736 396v8M769 397v5M772 397v5M800 397v5M732 403h9M735 404v33M735 437h6M735 438v5M742 426h104M743 438v8M749 438v8M737 446h6M749 446h7"
      stroke={RED}
    />
    <circle cx="786" cy="420" r="14" stroke={GREY} />
    <Boxes
      items={[
        [753, 394, 6, 3],
        [770, 394, 1, 3],
        [781, 394, 10, 3],
        [819, 394, 9, 3],
        [732, 415, 3, 8],
        [731, 435, 3, 2],
        [744, 443, 3, 2],
      ]}
    />
    <g stroke={WHITE}>
      <circle cx="738" cy="415" r="2" />
      <circle cx="738" cy="420" r="2" />
      <circle cx="857" cy="421" r="2" />
      <circle cx="857" cy="426" r="2" />
    </g>
    <path d="M857 420v2M857 425v2M738 414v2M738 419v2" stroke={RED} />
    <Boxes color="#ffff00" items={[[801, 383, 11, 6]]} />
    <Underline x={797} y={391} w={20} />
  </g>
);

const BarShapes = () => (
  <g>
    <g stroke="#0000ff">
      <path d="M743 472v-10h103M747 498l8 4 19-20h23l28 28h21M739 528l8 4 16-16h46l28 28h9" />
      <path d="M743 534v10l24 22h79M751 570v4h95M743 577v5h103M786 291v310M846 291v310" />
    </g>
    <path d="M774 475v5M797 475v5M774 476h23M786 474v4M763 507v6M809 507v6M763 509h46M786 507v6" stroke={RED} />
    <Boxes
      items={[
        [779, 473, 2, 3],
        [791, 473, 2, 3],
        [773, 505, 2, 3],
        [796, 505, 3, 3],
      ]}
    />
    <Boxes
      color={WHITE}
      items={[
        [740, 466, 2, 2],
        [829, 506, 2, 3],
        [840, 540, 2, 2],
        [740, 538, 2, 2],
        [811, 562, 6, 3],
        [748, 570, 2, 2],
        [795, 570, 6, 3],
        [740, 578, 2, 2],
        [792, 578, 5, 3],
      ]}
    />
    <Diamond x={762} y={491} />
    <Diamond x={810} y={491} />
    <Diamond x={753} y={522} />
    <Diamond x={822} y={526} />
    <Diamond x={752} y={498} color={WHITE} />
    <Diamond x={745} y={528} color={WHITE} />
    <Diamond x={757} y={554} color={WHITE} />
    <Arrowhead x={770} y={490} />
    <Arrowhead x={804} y={491} flip />
    <Arrowhead x={758} y={526} />
    <Arrowhead x={816} y={526} flip />
    {[462, 510, 544, 566, 574, 582].map((y) => (
      <BarTag key={y} y={y} />
    ))}
  </g>
);

const Details = () => (
  <g>
    <path d="M908 308h47M914 304v11M915 304v11M947 304v6M948 304v6M949 307v8" stroke={RED} />
    <path d="M908 471h3v1h6v-1h27v1h5v-1h6M914 459v13M915 459v13M947 459v13M949 465v6" stroke={RED} />
    <Boxes
      items={[
        [930, 305, 3, 3],
        [930, 468, 3, 3],
      ]}
    />
    <Boxes
      solid
      items={[
        [914, 475, 1, 3],
        [947, 475, 1, 3],
      ]}
    />
    <Boxes
      color="#ffff00"
      items={[
        [927, 287, 8, 5],
        [927, 389, 8, 6],
        [927, 502, 8, 6],
      ]}
    />
    <Underline x={924} y={294} w={16} />
    <Underline x={925} y={397} w={14} />
    <Underline x={925} y={509} w={14} />
    <Section top={315} />
    <Section top={420} flip />

    <rect x="915" y="533" width="33" height="7" stroke="#0000ff" />
    <rect x="914" y="532" width="35" height="9" stroke="#ff00ff" />
    <path d="M947 534l6 6M947 540h10" stroke="#00ffff" />
    <circle cx="959" cy="540" r="2" stroke={RED} />
    <path d="M959 538v4" stroke={RED} />

    <path d="M915 568h33v7h-33zM977 586v-25h5v25" stroke="#0000ff" />
    <path d="M948 572l5 8M982 578l6 8M1017 534l-5 6M1029 543l-5 6M1095 532l-6 9M1107 539l21-6" stroke={RED} />
    <RedTag x={966} y={580} side="right" />
    <RedTag x={1000} y={586} side="right" />
    <RedTag x={999} y={540} side="left" />
    <RedTag x={1011} y={549} side="left" />
    <RedTag x={1075} y={541} side="left" />
    <RedTag x={1142} y={533} side="right" />

    <path
      d="M1009 492h15v42h-15zM1033 492h15v42h-15zM1020 501h17v41h-17zM1088 489h15v42h-15zM1112 489h14v42h-14zM1099 498h15v41h-15z"
      stroke="#0000ff"
    />
    <Boxes
      items={[
        [931, 564, 3, 3],
        [911, 571, 3, 2],
        [978, 558, 2, 2],
        [973, 571, 2, 2],
        [983, 571, 3, 2],
        [1006, 513, 2, 3],
        [1017, 516, 2, 3],
        [1044, 513, 3, 3],
        [1012, 531, 2, 2],
        [1039, 531, 2, 2],
        [1024, 540, 2, 2],
        [1084, 508, 3, 7],
        [1096, 508, 2, 7],
        [1123, 508, 2, 7],
        [1090, 528, 2, 2],
        [1117, 528, 2, 2],
        [1102, 537, 2, 2],
      ]}
    />
    <Boxes
      solid
      items={[
        [948, 563, 1, 2],
        [950, 566, 1, 3],
        [1049, 487, 1, 3],
        [1038, 496, 1, 2],
        [1040, 499, 1, 3],
        [1103, 484, 1, 2],
        [1105, 488, 1, 2],
        [1127, 484, 1, 2],
        [1129, 488, 1, 2],
        [1115, 493, 1, 2],
        [1117, 496, 1, 3],
      ]}
    />
    <path d="M1025 487v4M1027 491v3M1051 491v3" stroke={RED} />
    <Boxes
      color={GREY}
      items={[
        [1034, 568, 6, 4],
        [1034, 575, 69, 4],
        [1033, 581, 90, 3],
        [1093, 607, 14, 5],
      ]}
    />
  </g>
);

const stamps = [
  { x: 899, text: "盖梁钢筋构造图" },
  { x: 957, text: "设 计" },
  { x: 998, text: "复 核" },
  { x: 1038, text: "审 核" },
  { x: 1079, text: "图 号" },
  { x: 1120, text: "日 期" },
];

const Drawing = () => (
  <svg
    viewBox="254.500 182.500 1087 634"
    preserveAspectRatio="xMidYMid meet"
    fill="none"
    shapeRendering="crispEdges"
    className="block w-full h-full"
    role="img"
    aria-label="5盖梁钢筋构造图"
  >
    <rect x="656" y="268" width="509" height="360" stroke={GREY} />
    <path
      d="M693 604v12h460v-12M766 604v12M850 604v12M948 604v12M966 604v12M989 604v12M1007 604v12M1030 604v12M1048 604v12M1070 604v12M1089 604v12M1112 604v12M1129 604v12"
      stroke={GREY}
    />
    <rect x="693" y="280" width="460" height="324" stroke={WHITE} />
    {stamps.map((s) => (
      <text key={s.x} x={s.x} y="612" fontSize="6" fontWeight="700" fill={GREY} textAnchor="middle">
        {s.text}
      </text>
    ))}
    <Elevation />
    <PlanView />
    <BarShapes />
    <Details />
    <QuantityTable />
  </svg>
);

/* ---------- document tabs ---------- */

const Slant = ({ fill, overlap }: { fill: string; overlap?: boolean }) => (
  <svg
    width="16"
    height="20"
    viewBox="0 0 16 20"
    className={`shrink-0 ${overlap ? "-ml-[14px]" : ""}`}
    aria-hidden="true"
  >
    <path d="M0 20C5 16 11 2 16 .5V20z" fill={fill} />
    <path d="M0 20C5 16 11 2 16 .5" fill="none" stroke="#a8a8a8" />
  </svg>
);

const docs = [
  { name: "1总图布置图.dwg", width: "w-[131px] pl-[19px]" },
  { name: "2桥面铺装.dwg", width: "w-[116px] pl-[18px]" },
  { name: "3桥墩一般构造图.dwg", width: "w-[158px] pl-[18px]" },
  { name: "4主梁一般构造图.dwg", width: "w-[158px] pl-[18px]" },
];

const DocumentTabs = () => (
  <div className="flex items-end h-[22px] bg-[#e6e6e6] font-['Open_Sans','Noto_Sans_CJK_SC',sans-serif] text-[13px] text-[#444] overflow-hidden">
    <Slant fill="#ececec" />
    {docs.map((doc) => (
      <button
        key={doc.name}
        type="button"
        className={`h-5 shrink-0 text-left leading-[18px] whitespace-nowrap border-t border-r border-[#a8a8a8] rounded-tr-[3px] bg-[#ececec] ${doc.width}`}
      >
        {doc.name}
      </button>
    ))}
    <Slant fill="#fdfdfd" overlap />
    <div className="h-5 w-[176px] shrink-0 flex items-center gap-4 pl-4 border-t border-r border-[#a8a8a8] rounded-tr-[3px] bg-[#fdfdfd]">
      <button type="button" className="font-bold leading-[18px] whitespace-nowrap">
        5盖梁钢筋构造图.dwg
      </button>
      <button type="button" aria-label="关闭标签">
        <Icon size={9}>
          <path d="M1 1l7 7M8 1 1 8" stroke="#777" strokeWidth="1.500" />
        </Icon>
      </button>
    </div>
  </div>
);

export default function App() {
  return (
    <div className="h-screen flex flex-col overflow-hidden bg-[#e6e6e6] font-['Noto_Sans','Noto_Sans_CJK_SC',sans-serif]">
      <Header />
      <Ribbon />
      <div className="flex-1 min-h-0 flex">
        <div className="w-[29px] shrink-0 pt-[7px] flex items-start">
          <span className="w-[5px] h-[42px] bg-[#d2d2d2]" />
          <button type="button" className="ml-1 flex flex-col items-center text-xs leading-[14px] text-[#222]">
            <svg width="14" height="17" viewBox="-0.5 -0.5 14 17" fill="none" stroke="#222" className="shrink-0" aria-hidden="true">
              <path d="M0 7C0 3 2 3 5 3M4 1l2 2-2 2M8 1h5v2H8zM11 3v6M9 3v2" />
              <path d="M0 11h13v4H0zM4 13h2M8 13h2" stroke="#444" />
            </svg>
            <span className="[writing-mode:vertical-rl] [text-orientation:sideways]">图库</span>
          </button>
        </div>
        <PropertyPanel />
        <main className="relative flex-1 min-w-0 flex flex-col border-l border-[#e6e6e6]">
          <DocumentTabs />
          <div className="flex-1 min-h-0 bg-black">
            <Drawing />
          </div>
          <div className="h-[2px] pl-16 border-t border-[#777] bg-[#e6e6e6]">
            <div className="w-12 h-px bg-white" />
          </div>
          <p className="absolute right-[15px] bottom-[9px] font-['Open_Sans',sans-serif] text-lg leading-6 text-[#a6a6a6]">
            CSDN @biyezuopinvip
          </p>
        </main>
      </div>
    </div>
  );
}
